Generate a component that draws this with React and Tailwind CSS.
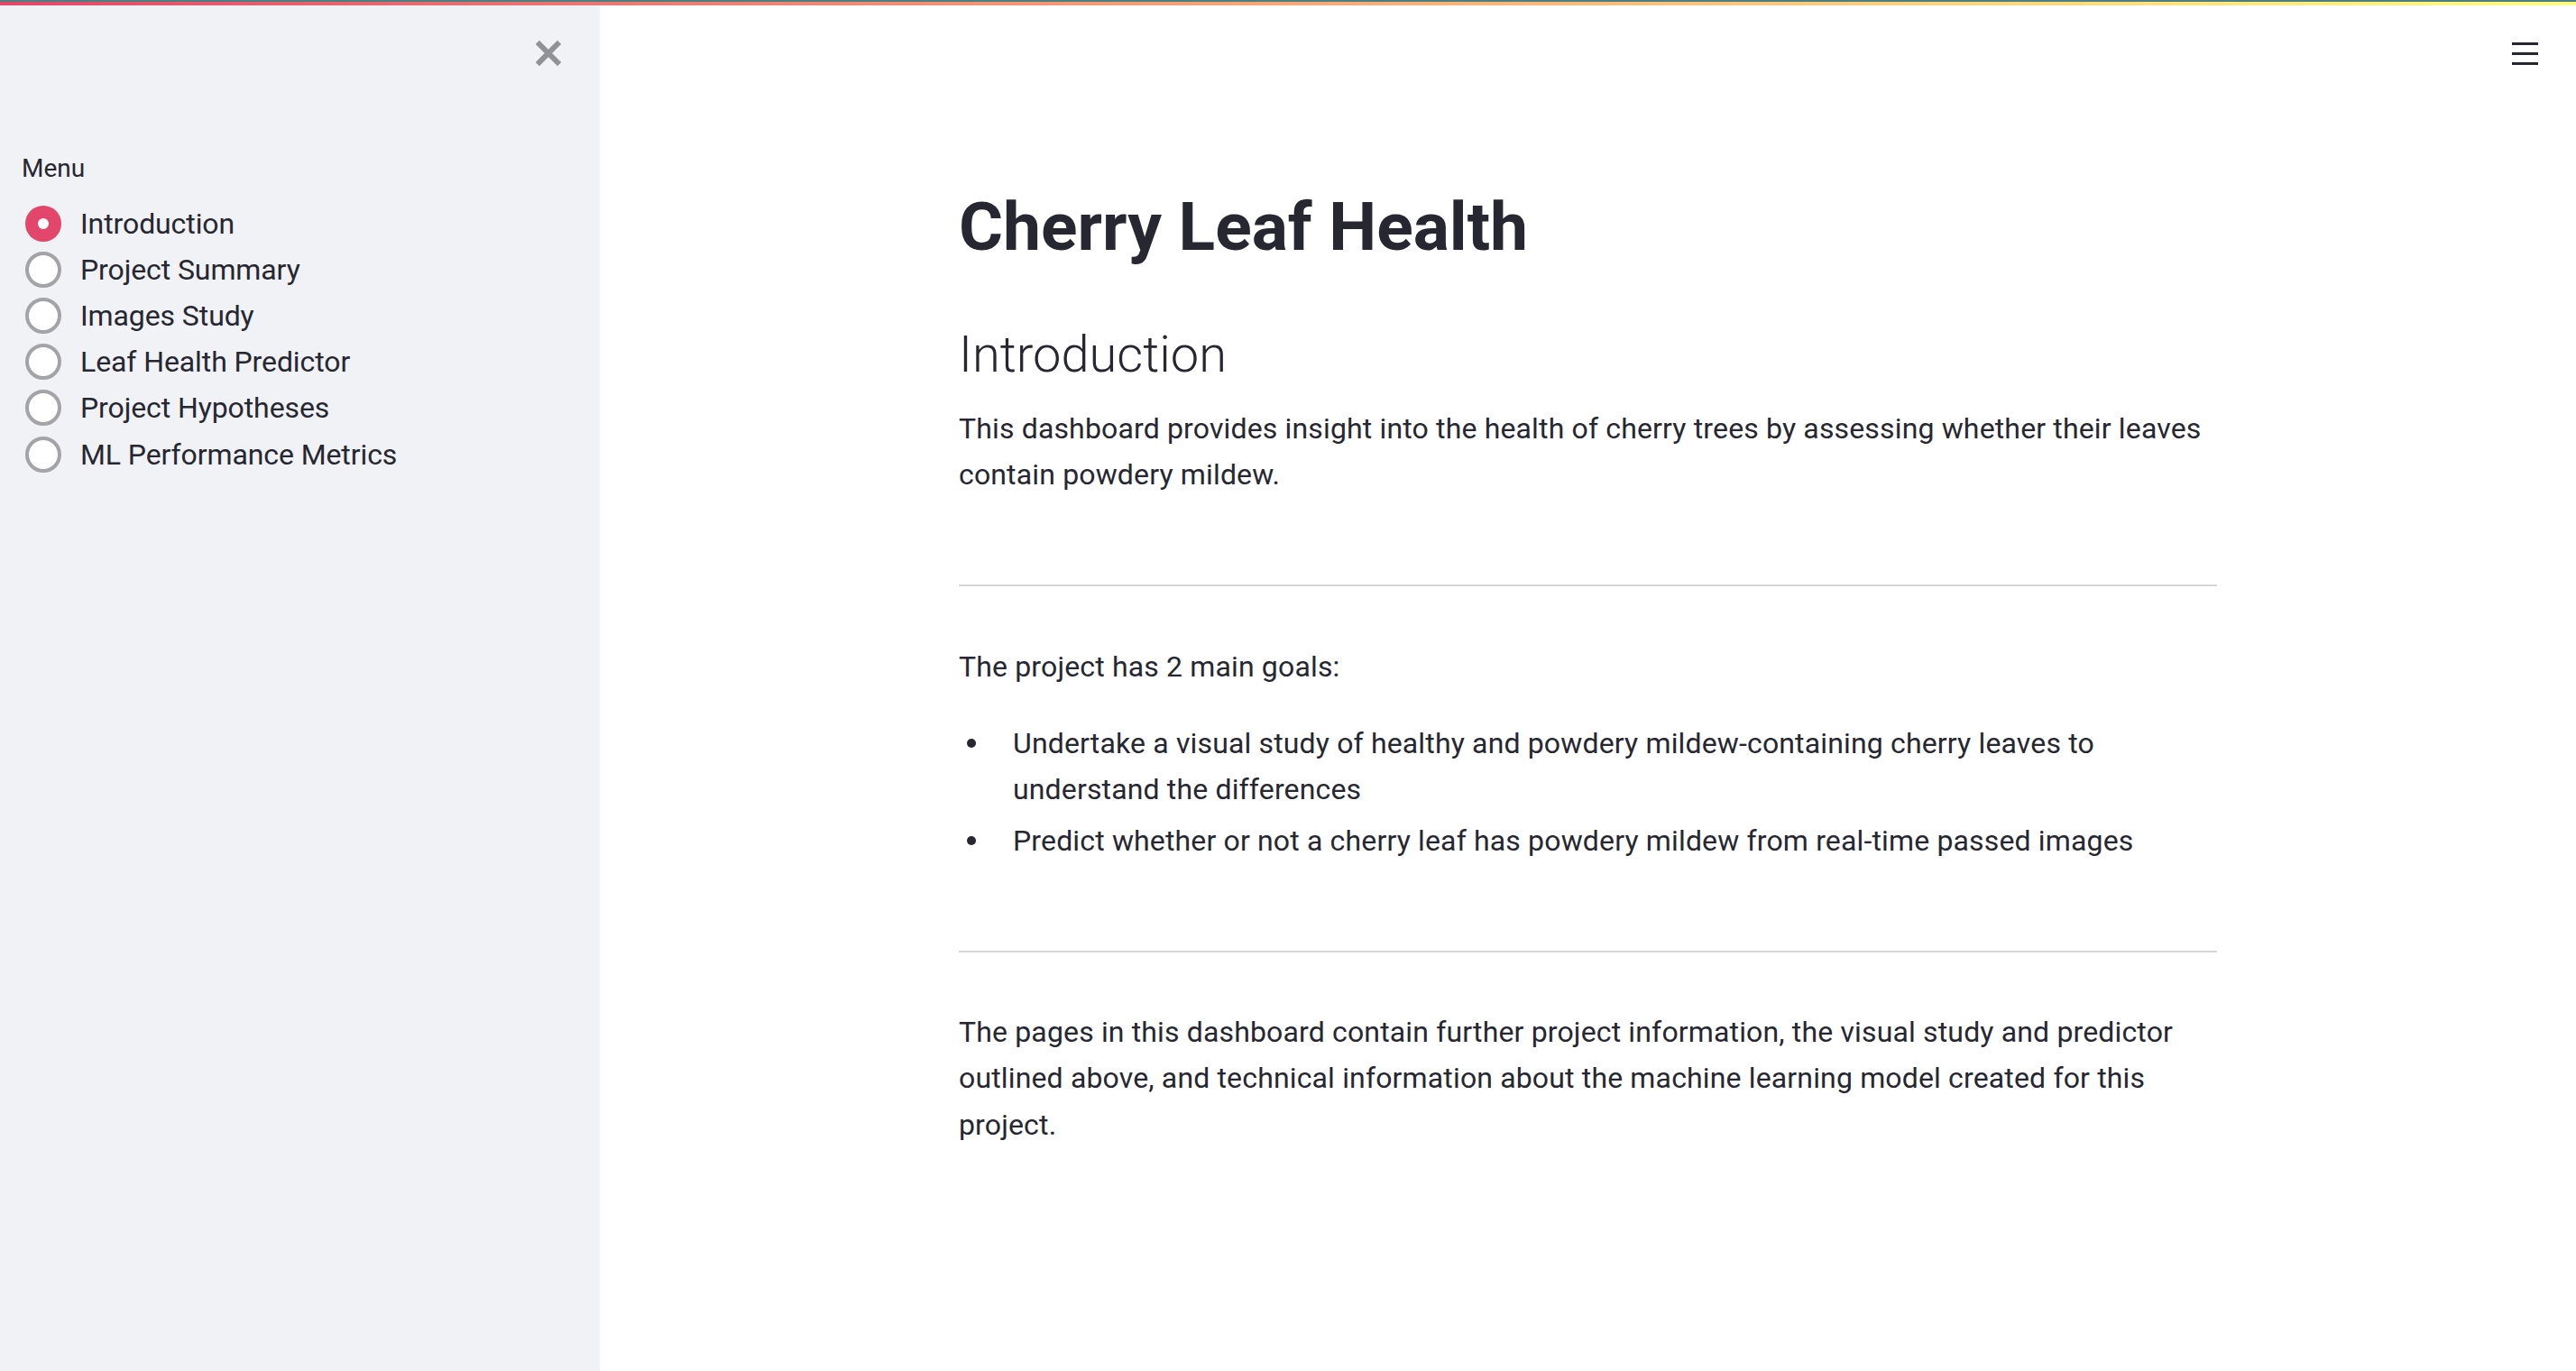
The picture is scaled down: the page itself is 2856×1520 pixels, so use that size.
import React, { useState } from 'react';

const pages = [
    'Introduction',
    'Project Summary',
    'Images Study',
    'Leaf Health Predictor',
    'Project Hypotheses',
    'ML Performance Metrics',
];

const font = { fontFamily: 'Roboto, "Noto Sans", sans-serif' };

const Radio = ({ label, checked, onClick }) => (
    <div className="flex items-center h-[51.2px] cursor-pointer" onClick={onClick}>
        {checked ? (
            <span className="w-[40px] h-[40px] rounded-full bg-[#e2466a] flex items-center justify-center shrink-0">
                <span className="w-[12px] h-[12px] rounded-full bg-white" />
            </span>
        ) : (
            <span className="w-[40px] h-[40px] rounded-full bg-white border-[4px] border-[#a3a3a8] shrink-0" />
        )}
        <span className="ml-[21px] text-[32px] text-[#262730] leading-none tracking-[-0.1px]">{label}</span>
    </div>
);

const App = () => {
    const [page, setPage] = useState('Introduction');

    return (
        <div className="w-full h-screen flex flex-col bg-white overflow-hidden" style={font}>
            {/* top decoration */}
            <div className="h-[2px] bg-[#4b7f80]" />
            <div className="h-[4px] bg-gradient-to-r from-[#e2466a] to-[#fffd80]" />

            <div className="flex flex-1 min-h-0">
                {/* Sidebar */}
                <aside className="w-[665px] shrink-0 bg-[#f0f2f6] flex flex-col">
                    <div className="flex justify-end pr-[43px] pt-[39px]">
                        <svg width="28" height="28" viewBox="0 0 28 28">
                            <path d="M4 4 L24 24 M24 4 L4 24" stroke="#909297" strokeWidth="6" strokeLinecap="square" />
                        </svg>
                    </div>
                    <div className="pl-[24px] mt-[96px] text-[28px] leading-[36px] text-[#262730]">Menu</div>
                    <div className="pl-[28px] mt-[17px] flex flex-col">
                        {pages.map((p) => (
                            <Radio key={p} label={p} checked={page === p} onClick={() => setPage(p)} />
                        ))}
                    </div>
                </aside>

                {/* Main */}
                <main className="flex-1 relative">
                    <div className="absolute top-[41px] right-[42px] flex flex-col gap-[8px]">
                        <span className="block w-[29px] h-[3px] bg-[#262730]" />
                        <span className="block w-[29px] h-[3px] bg-[#262730]" />
                        <span className="block w-[29px] h-[3px] bg-[#262730]" />
                    </div>

                    <div className="w-[1395px] mx-auto pt-[201px] text-[#262730]">
                        <h1 className="text-[75px] font-bold leading-[89px]">Cherry Leaf Health</h1>
                        <h2 className="mt-[64px] text-[56px] font-light leading-[67px]">Introduction</h2>
                        <p className="mt-[23px] text-[32px] leading-[51.2px] tracking-[0.15px]">
                            This dashboard provides insight into the health of cherry trees by assessing whether their leaves contain powdery mildew.
                        </p>

                        <hr className="mt-[96px] border-0 h-[2px] bg-[#d6d6d9]" />

                        <p className="mt-[64px] text-[32px] leading-[51.2px] tracking-[0.15px]">The project has 2 main goals:</p>
                        <ul className="mt-[33px] text-[32px] leading-[51.2px] tracking-[0.15px] flex flex-col gap-[6px]">
                            <li className="flex">
                                <span className="w-[60px] shrink-0 flex justify-start pl-[9px] pt-[20px]">
                                    <span className="w-[10px] h-[10px] rounded-full bg-[#262730]" />
                                </span>
                                <span className="w-[1220px]">Undertake a visual study of healthy and powdery mildew-containing cherry leaves to understand the differences</span>
                            </li>
                            <li className="flex">
                                <span className="w-[60px] shrink-0 flex justify-start pl-[9px] pt-[20px]">
                                    <span className="w-[10px] h-[10px] rounded-full bg-[#262730]" />
                                </span>
                                <span>Predict whether or not a cherry leaf has powdery mildew from real-time passed images</span>
                            </li>
                        </ul>

                        <hr className="mt-[96px] border-0 h-[2px] bg-[#d6d6d9]" />

                        <p className="mt-[63px] text-[32px] leading-[51.2px] tracking-[0.15px]">
                            The pages in this dashboard contain further project information, the visual study and predictor outlined above, and technical information about the machine learning model created for this project.
                        </p>
                    </div>
                </main>
            </div>
        </div>
    );
};

export default App;
